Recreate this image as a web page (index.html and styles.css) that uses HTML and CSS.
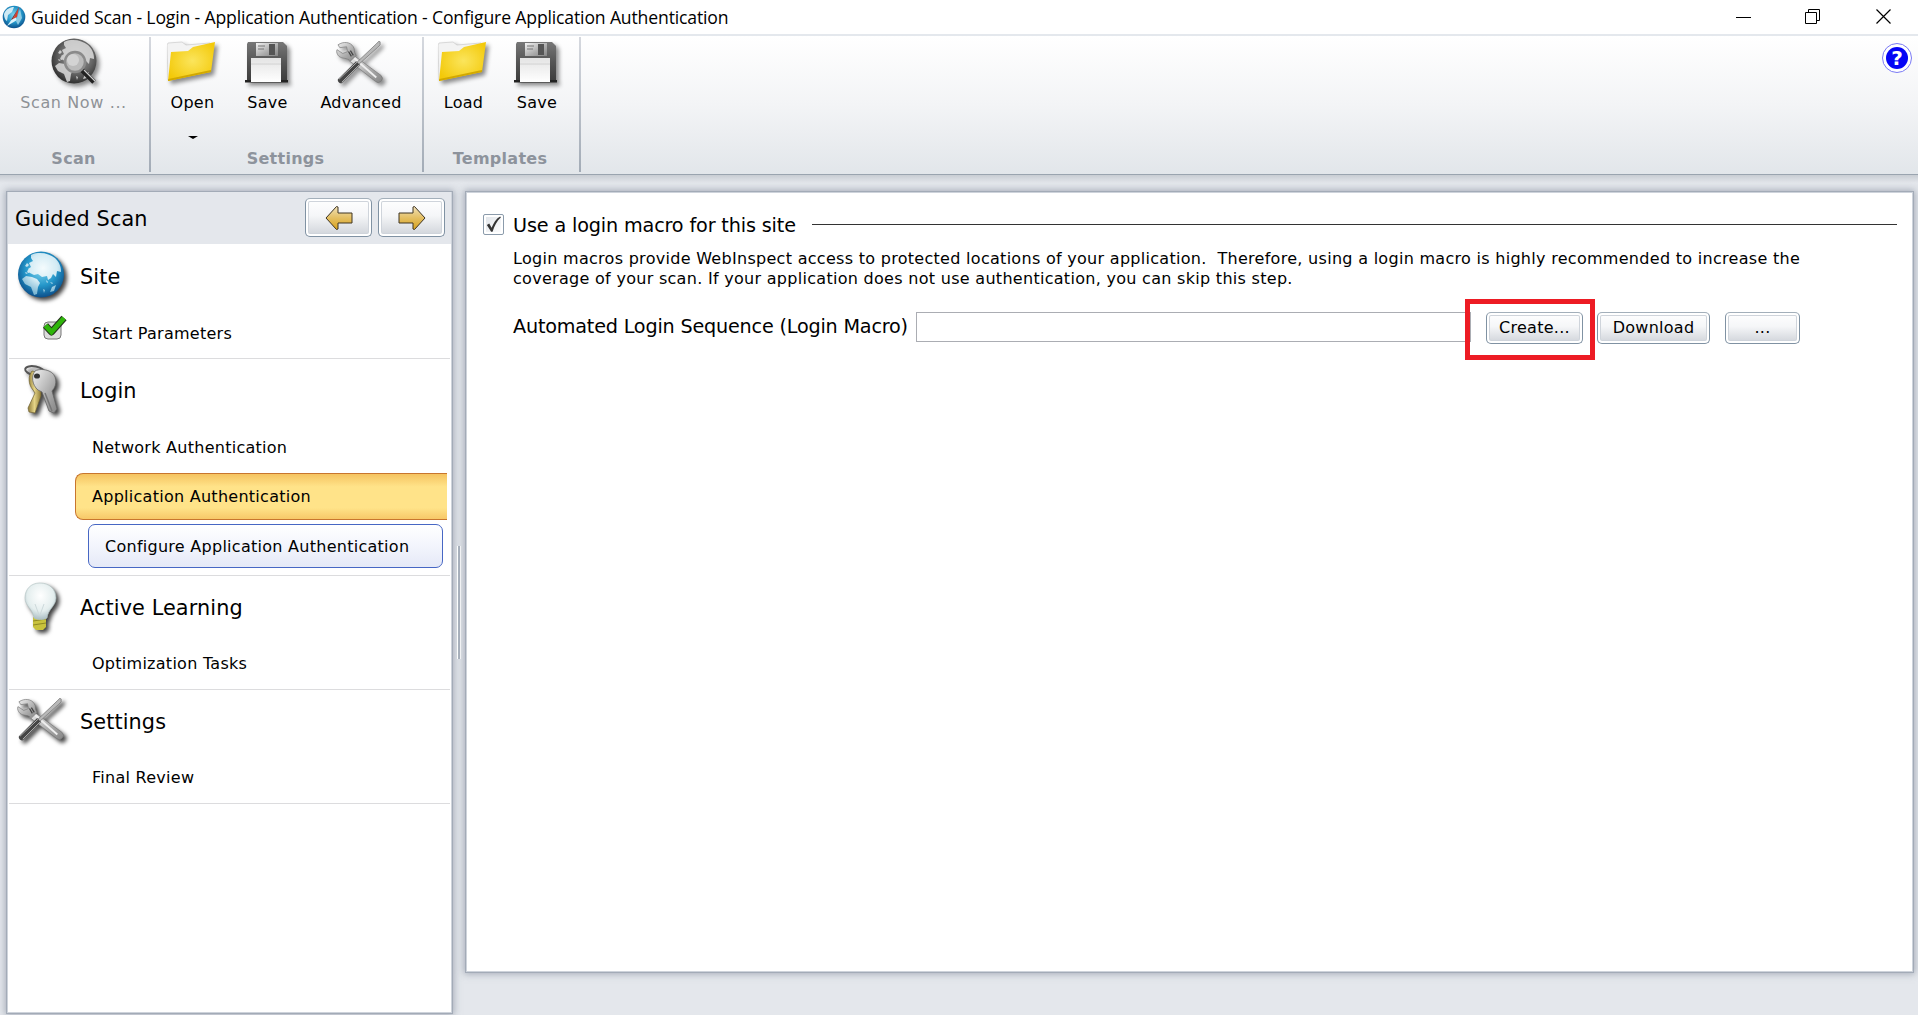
FILE: index.html
```html
<!DOCTYPE html>
<html lang="en">
<head>
<meta charset="utf-8">
<title>Guided Scan</title>
<link rel="stylesheet" href="styles.css">
</head>
<body>
<svg class="defs" width="0" height="0" aria-hidden="true">
  <defs>
    <radialGradient id="gBlue" cx=".5" cy=".4" r=".62"><stop offset="0" stop-color="#7fd4ef"/><stop offset=".55" stop-color="#2496c9"/><stop offset="1" stop-color="#0a4a86"/></radialGradient>
    <radialGradient id="gGray" cx=".55" cy=".4" r=".62"><stop offset="0" stop-color="#a5a5a5"/><stop offset=".6" stop-color="#666"/><stop offset="1" stop-color="#2c2c2c"/></radialGradient>
    <radialGradient id="gLand" gradientUnits="userSpaceOnUse" cx="26" cy="17" r="26"><stop offset="0" stop-color="#f4fbfd"/><stop offset=".55" stop-color="#d3ebf4"/><stop offset="1" stop-color="#7db8d4"/></radialGradient>
    <radialGradient id="gFolder" cx=".52" cy=".48" r=".6"><stop offset="0" stop-color="#fbe55c"/><stop offset="1" stop-color="#f3c909"/></radialGradient>
    <radialGradient id="gBulb" cx=".5" cy=".35" r=".7"><stop offset="0" stop-color="#fff"/><stop offset=".6" stop-color="#e4eeee"/><stop offset="1" stop-color="#9fb4bb"/></radialGradient>
    <linearGradient id="gDark" x2="0" y2="1"><stop offset="0" stop-color="#777"/><stop offset=".5" stop-color="#555"/><stop offset="1" stop-color="#3b3b3b"/></linearGradient>
    <linearGradient id="gPaper" x2="0" y2="1"><stop offset="0" stop-color="#e4e4e4"/><stop offset="1" stop-color="#fff"/></linearGradient>
    <linearGradient id="gSteel" x2="1" y2="1"><stop offset="0" stop-color="#f2f2f2"/><stop offset=".6" stop-color="#aaa"/><stop offset="1" stop-color="#858585"/></linearGradient>
    <linearGradient id="gArrow" x2="0" y2="1"><stop offset="0" stop-color="#f0e0b8"/><stop offset=".5" stop-color="#e4bf62"/><stop offset="1" stop-color="#d9a21b"/></linearGradient>
    <linearGradient id="gBrass" x2="1" y2="0"><stop offset="0" stop-color="#8f7b38"/><stop offset=".5" stop-color="#e5d487"/><stop offset="1" stop-color="#8f7b38"/></linearGradient>
    <symbol id="floppy" viewBox="0 0 48 48">
      <path d="M3 1h35l4 4v36H1l1-2V3z" fill="url(#gDark)"/>
      <path d="M0 39h43v2.500H0z" fill="#222"/>
      <path d="M11 2h22v13H11z" fill="url(#gSteel)"/>
      <path d="M24 3h6v11h-6z" fill="#555"/>
      <path d="M13 5h7M13 8h6" stroke="#777" fill="none"/>
      <path d="M6 17h30v24H6z" fill="url(#gPaper)"/>
      <path d="M6 23h30" stroke="#d2d2d2"/>
    </symbol>
    <symbol id="folder" viewBox="0 0 48 48">
      <path d="M0 4l1-2 14-1 4 3 24-2v28L1 39z" fill="#f3f3f3" stroke="#ccc" stroke-width=".7"/>
      <path d="M4 11l17-1 5-4 22-5-4 30L1 40z" fill="url(#gFolder)"/>
      <path d="M44 31L1 40l.4-2L44 29z" fill="#d2a800"/>
    </symbol>
    <symbol id="tools" viewBox="0 0 50 48">
      <path d="M17 14l30 22a4 4 0 0 1-6 6L13 20z" fill="url(#gSteel)" stroke="#777" stroke-width=".7"/>
      <path d="M19 18l23 20" stroke="#eee" stroke-width="2"/>
      <path d="M2 4C8 0 15 1 18 6c2 3 0 5 3 9l-6 6c-4-4-8-2-12-5C1 14 0 11 1 9l6 4 5-2-1-5-7 1z" fill="url(#gSteel)" stroke="#777" stroke-width=".7"/>
      <path d="M13 11l3 5M15 10l3 5" stroke="#444" stroke-width="1.3"/>
      <path d="M42 3l3-3 1 1v3l-3 3-20 18-2-2z" fill="#b8b8b8" stroke="#777" stroke-width=".8"/>
      <path d="M21 21l4 4L6 44c-2 1-5-2-4-4z" fill="#444"/>
      <path d="M22 22L3 40M24 25L6 43" stroke="#bbb" stroke-width=".9"/>
    </symbol>
    <symbol id="land" viewBox="0 0 48 48">
      <path d="M14 4c4-2 6-2 9-2 6 0 11 2 15 5 4 4 6 8 6 14l-4-1-1 6-3-3-2 4-3 2-1-4-5 1-4-3-4 1-4-2-2-4 3-2-2-4 4-2-2-3z"/>
      <path d="M5 28l4-3 6 1 5 2 3 4-2 4-1 7-3 1-3-8-6-3z"/>
      <path d="M10 12l2 2-2 2-2-1zM14 17l3 1-2 3-4 1-1-2zM8 21l3 1-2 1zM35 36l4-2-2 6-4 1zM33 31l3 1-1 1zM29 29l2 2-1 1zM26 38l2 1-1 3z"/>
    </symbol>
  </defs>
</svg>
<div class="window">
  <header class="titlebar">
    <svg class="app-icon" viewBox="0 0 24 24"><circle cx="12" cy="12" r="11.3" fill="url(#gBlue)"/><path d="M2 9c2-5 6-7 10-7l-2 5-4 3-1 6c-2-1-3-4-3-7z" fill="#cfeaf4"/><path d="M13 10l-8 11 10-6z" fill="#d9f3fc"/><path d="M18 4l2 9-4 7-2-4z" fill="#8ecbe4"/><path d="M17 2l-2 10-4 2z" fill="#dd3b24"/><path d="M17 2l-6 12-2 1z" fill="#802a2a"/></svg>
    <h1 class="caption">Guided Scan - Login - Application Authentication - Configure Application Authentication</h1>
    <div class="controls">
      <svg viewBox="0 0 16 16"><path d="M0 8.5h15" stroke="#000"/></svg>
      <svg viewBox="0 0 16 16"><path d="M.5 3.5h11v11H.5zM3.500 3V.5h11v11H12" fill="none" stroke="#000"/></svg>
      <svg viewBox="0 0 16 16"><path d="M.5.5l14 14M14.500.5l-14 14" stroke="#000" stroke-width="1.2"/></svg>
    </div>
  </header>

  <div class="ribbon">
    <section class="group g-scan">
      <div class="tools">
        <div class="tool disabled"><svg class="ic shadow" viewBox="0 0 48 48"><circle cx="24" cy="23" r="22.500" fill="url(#gGray)"/><use href="#land" fill="#dcdcdc" opacity=".85" width="48" height="48"/><path d="M32 32l12 12" stroke="#222" stroke-width="5"/><path d="M34 32l11 11" stroke="#ccc" stroke-width="1.300"/><circle cx="25" cy="24" r="10" fill="#bbb" stroke="#8b8b8b" stroke-width="2.500"/><circle cx="23" cy="22" r="6" fill="#d3d3d3"/></svg><span>Scan Now ...</span></div>
      </div>
      <div class="group-name">Scan</div>
    </section>
    <section class="group g-settings">
      <div class="tools">
        <div class="tool w-open"><svg class="ic shadow" viewBox="0 0 48 48"><use href="#folder"/></svg><span>Open</span><i class="caret"></i></div>
        <div class="tool w-save"><svg class="ic shadow" viewBox="0 0 48 48"><use href="#floppy"/></svg><span>Save</span></div>
        <div class="tool w-adv"><svg class="ic shadow" viewBox="0 0 50 48"><use href="#tools"/></svg><span>Advanced</span></div>
      </div>
      <div class="group-name">Settings</div>
    </section>
    <section class="group g-templates">
      <div class="tools">
        <div class="tool w-load"><svg class="ic shadow" viewBox="0 0 48 48"><use href="#folder"/></svg><span>Load</span></div>
        <div class="tool w-save"><svg class="ic shadow" viewBox="0 0 48 48"><use href="#floppy"/></svg><span>Save</span></div>
      </div>
      <div class="group-name">Templates</div>
    </section>
    <div class="help"><span>?</span></div>
  </div>

  <main class="workspace">
    <aside class="panel sidebar">
      <div class="side-head">
        <h2>Guided Scan</h2>
        <button class="btn nav"><svg viewBox="0 0 28 26"><path d="M1 13L11.500 1.500 13 2v6h14v10H13v6l-1.500.5z" fill="url(#gArrow)" stroke="#3e3423"/></svg></button>
        <button class="btn nav"><svg viewBox="0 0 28 26"><path d="M27 13L16.500 1.500 15 2v6H1v10h14v6l1.500.5z" fill="url(#gArrow)" stroke="#3e3423"/></svg></button>
      </div>
      <section class="step site">
        <div class="step-head"><svg class="ic dark" viewBox="0 0 48 48"><circle cx="24" cy="23.500" r="23" fill="url(#gBlue)"/><use href="#land" fill="url(#gLand)" width="48" height="48"/></svg><h3>Site</h3></div>
        <div class="item"><svg class="check" viewBox="0 0 26 26"><rect x="2" y="8" width="17" height="17" rx="4" fill="#ddd" stroke="#777"/><path d="M3.500 11.500L9.500 18 22 4" fill="none" stroke="#26331f" stroke-width="7" stroke-linejoin="round"/><path d="M3.500 11.500L9.500 18 22 4" fill="none" stroke="#2fb50b" stroke-width="4.800"/></svg>Start Parameters</div>
      </section>
      <section class="step login">
        <div class="step-head"><svg class="ic dark" viewBox="0 0 48 48"><ellipse cx="18" cy="5" rx="10" ry="4.500" transform="rotate(12 18 5)" fill="none" stroke="#555" stroke-width="2"/><path d="M15 5c-4 5-4 13 1 19l2 3-7 15 1 4 6 1 6-17V7z" fill="url(#gBrass)" stroke="#6f6030" stroke-width=".7"/><path d="M18 5c-4 5-3 14 3 19l4 2 7 19 5 2 3-4-5-18c6-6 5-17-3-20-5-2-10-2-14 0z" fill="url(#gSteel)" stroke="#666" stroke-width=".8"/><path d="M28 27l7 18" stroke="#777" stroke-width="1.500"/><ellipse cx="20" cy="10" rx="3" ry="2.600" fill="#333"/></svg><h3>Login</h3></div>
        <div class="item">Network Authentication</div>
        <div class="item active">Application Authentication</div>
        <div class="item sub">Configure Application Authentication</div>
      </section>
      <section class="step late">
        <div class="step-head"><svg class="ic dark" viewBox="0 0 48 48"><path d="M16 34h13v10l-3 3h-7l-3-3z" fill="#c9c23c"/><path d="M16 38l13-2M16 42l13-2" stroke="#8f8923"/><path d="M23 0c9 0 16 6 16 15 0 8-8 11-9 20-3 2-10 2-13 0-1-9-9-12-9-20C8 6 14 0 23 0z" fill="url(#gBulb)" stroke="#b4c4c4" stroke-width=".7"/><path d="M18 21l4 11M27 21l-4 11" stroke="#cdd9db" fill="none"/></svg><h3>Active Learning</h3></div>
        <div class="item">Optimization Tasks</div>
      </section>
      <section class="step late">
        <div class="step-head"><svg class="ic dark" viewBox="0 0 50 48"><use href="#tools"/></svg><h3>Settings</h3></div>
        <div class="item">Final Review</div>
      </section>
    </aside>
    <div class="splitter"></div>
    <section class="panel content">
      <div class="legend">
        <span class="checkbox"><svg viewBox="0 0 20 20"><path d="M3 10.500l2.500-1.500 2.500 4.500C10 8.500 12.500 4 17 1.500l.8.8C13.500 6.500 11 11 9 17.500H7.500z" fill="#333"/></svg></span>
        <h2>Use a login macro for this site</h2>
        <hr>
      </div>
      <p class="desc">Login macros provide WebInspect access to protected locations of your application.&nbsp; Therefore, using a login macro is highly recommended to increase the<br>coverage of your scan. If your application does not use authentication, you can skip this step.</p>
      <div class="field">
        <label>Automated Login Sequence (Login Macro)</label>
        <input type="text">
        <button class="btn create"><span>Create...</span></button>
        <button class="btn download"><span>Download</span></button>
        <button class="btn browse"><span>...</span></button>
        <div class="highlight"></div>
      </div>
    </section>
  </main>
</div>
</body>
</html>
```
FILE: styles.css
```css
* { box-sizing: border-box; }
body { margin: 0; font-family: Verdana, "DejaVu Sans", sans-serif; font-size: 16px; letter-spacing: .27px; color: #000; overflow: hidden; }
h1, h2, h3, p { margin: 0; font-weight: 400; }
.defs { position: absolute; }
svg { display: block; overflow: visible; }
.window { width: 1918px; height: 1015px; display: flex; flex-direction: column; background: #e4e7ec; }

.titlebar { height: 36px; flex: none; display: flex; align-items: center; background: #fff; border-bottom: 2px solid #e4e8ed; padding: 0 26px 0 2px; }
.app-icon { width: 24px; height: 24px; }
.caption { font: 17.600px/34px "Open Sans", sans-serif; margin-left: 5px; white-space: nowrap; letter-spacing: -.15px; }
.controls { margin-left: auto; display: flex; gap: 53px; }
.controls svg { width: 16px; height: 16px; }
.controls svg:last-child { margin-left: 2px; }

.ribbon { height: 139px; flex: none; display: flex; background: linear-gradient(#fff, #f3f4f6 50%, #e2e6ea); border-bottom: 1px solid #9aa4af; }
.group { height: 135px; margin-top: 1px; display: flex; flex-direction: column; border-right: 2px solid; border-image: linear-gradient(#d6d9df, #a2abb6) 1; }
.g-scan { width: 151px; padding-right: 2px; }
.g-settings { width: 273px; padding-left: 10px; }
.g-templates { width: 157px; padding-left: 8px; }
.tools { display: flex; height: 109px; }
.tool { display: flex; flex-direction: column; align-items: center; }
.tool span { line-height: 20px; margin-top: 7px; white-space: nowrap; }
.tool .ic { width: 48px; height: 48px; margin-top: 1px; }
.g-scan .tool { width: 148px; }
.tool.disabled { color: #8f9296; }
.tool.disabled span { letter-spacing: .62px; }
.w-open { width: 63px; }
.w-open .ic, .w-load .ic { margin: 4px 3px 0 0; width: 48px; height: 48px; }
.w-open span, .w-load span { margin-top: 4px; }
.w-save { width: 87px; }
.w-save .ic { margin: 4px -1px 0 1px; width: 48px; height: 48px; }
.w-save span { margin-top: 4px; }
.w-adv { width: 100px; }
.w-adv .ic { width: 48px; height: 46px; margin: 4px 3px 0 0; }
.w-adv span { margin-top: 6px; }
.w-load { width: 63px; }
.g-templates .w-save { width: 84px; }
.caret { width: 0; height: 0; border: 5px solid transparent; border-top: 3px solid #000; border-bottom: 0; margin-top: 23px; }
.group-name { font-weight: 700; font-size: 16px; line-height: 20px; color: #8d939c; text-align: center; padding-top: 3px; }
.g-settings .group-name { padding-right: 12px; }
.g-templates .group-name { padding-right: 11px; }
.shadow { filter: drop-shadow(3px 3px 2px rgba(0,0,0,.45)); }
.dark { filter: drop-shadow(3px 3px 2px rgba(0,0,0,.75)); }
.help { width: 30px; height: 30px; margin: 7px 6px 0 auto; padding: 3px; border: 1px solid #7a7af5; border-radius: 50%; background: #fff; }
.help span { display: block; height: 22px; border-radius: 50%; background: #0505f5; color: #fff; font: 700 20px/22px "DejaVu Sans", sans-serif; letter-spacing: 0; text-align: center; }

.workspace { flex: 1; display: flex; padding: 17px 4px 0 6px; background: linear-gradient(#c8cdd3, #e4e7ec 8px); align-items: flex-start; }
.panel { background: #fff; border: 1px solid #a3abb7; box-shadow: inset 0 0 0 1px #ced3db, 0 0 7px 1px rgba(130,140,155,.65); }
.sidebar { width: 447px; height: 823px; margin-top: -1px; padding: 0 1px; }
.side-head { height: 52px; background: #e4e7ec; display: flex; align-items: center; padding: 0 6px 2px 7px; }
.side-head h2 { font-size: 20.800px; margin-right: auto; line-height: 30px; padding-top: 3px; letter-spacing: .1px; }
.btn { display: flex; align-items: center; justify-content: center; font: inherit; letter-spacing: inherit; color: #000; padding: 0; border: 1.500px solid #8092a3; border-top-color: #a3afba; border-radius: 5px; box-shadow: inset 0 0 0 2px #fff, inset 0 0 0 3px #cfd4db; background: linear-gradient(#fff, #f5f6f8 45%, #cfd3d9); }
.nav { width: 67px; height: 39px; margin-left: 6px; margin-top: 1px; }
.nav svg { width: 28px; height: 26px; }

.step { margin: 0 1px; height: 114px; border-bottom: 1px solid #dcdcde; }
.step.site { height: 115px; }
.step.login { height: 217px; }
.step-head { display: flex; align-items: center; height: 64px; padding-left: 8px; }
.site .step-head { height: 65px; }
.step-head .ic { width: 48px; height: 48px; margin-top: -3px; }
.step-head h3 { font-size: 20.800px; line-height: 30px; margin-left: 15px; letter-spacing: .1px; }
.item { position: relative; display: flex; align-items: center; height: 49px; padding-left: 83px; white-space: nowrap; }
.late .item { height: 47px; }
.check { position: absolute; left: 33px; top: 5px; width: 26px; height: 26px; }
.active { height: 47px; margin: 1px 3px 0 66px; padding-left: 16px; border: 1px solid #c8762e; border-right: 0; border-radius: 8px 0 0 8px; background: linear-gradient(#f5c360, #ffe389 28%, #ffe389 75%, #f7c868); }
.sub { height: 44px; margin: 4px 7px 0 79px; padding-left: 16px; border: 1.500px solid #4767c4; border-radius: 7px; background: linear-gradient(#fff, #f4f6fd 45%, #e5e9f7); }
.splitter { width: 4px; height: 113px; margin: 354px 4px 0 4px; border-left: 1px solid #fff; border-right: 1px solid #fff; background: #abb3be; }

.content { width: 1449px; height: 782px; margin-top: -1px; padding: 20px 16px 0 17px; }
.legend { display: flex; align-items: center; height: 25px; }
.checkbox { width: 21px; height: 21px; border: 1.500px solid #8b9bab; border-radius: 2px; background: linear-gradient(135deg, #dfe3e8, #fff); box-shadow: inset 0 0 0 2px #fff; }
.checkbox svg { width: 19px; height: 19px; }
.legend h2 { font-size: 19.200px; line-height: 25px; margin-left: 9px; padding-top: 1px; white-space: nowrap; width: 299px; letter-spacing: -.14px; }
.legend hr { flex: 1; border: 0; height: 1px; margin: 0; background: #333; }
.desc { margin: 12px 0 0 30px; line-height: 20px; white-space: nowrap; letter-spacing: .292px; }
.field { position: relative; display: flex; align-items: center; margin: 22px 0 0 30px; height: 32px; }
.field label { font-size: 19.200px; width: 403px; white-space: nowrap; letter-spacing: -.19px; padding-bottom: 2px; }
.field input { width: 555px; height: 30px; border: 1px solid #abadb3; padding: 0; margin-right: 15px; }
.field .btn { height: 32px; margin-top: 1px; }
.create { width: 97px; margin-right: 14px; }
.download { width: 113px; margin-right: 15px; }
.browse { width: 75px; }
.highlight { position: absolute; left: 952px; top: -12px; width: 130px; height: 61px; border: 5px solid #ed1c24; }
```
